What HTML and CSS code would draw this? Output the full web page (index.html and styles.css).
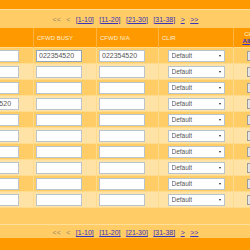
FILE: index.html
```html
<!DOCTYPE html>
<html lang="en">
<head>
  <meta charset="UTF-8">
  <title>Call Forwarding</title>
  <link rel="stylesheet" href="styles.css">
</head>
<body>
  <div class="page">
    <div class="topbar"></div>

    <!-- Pager (top) -->
    <div class="pager">
      <span>&lt;&lt;</span>
      <span>&lt;</span>
      <a href="#">[1-10]</a>
      <a href="#">[11-20]</a>
      <a href="#">[21-30]</a>
      <a href="#">[31-38]</a>
      <a href="#">&gt;</a>
      <a href="#">&gt;&gt;</a>
    </div>

    <table class="grid">
      <colgroup>
        <col class="c-num"><col class="c-num"><col class="c-num"><col class="c-clir"><col class="c-chk">
      </colgroup>
      <thead>
        <tr>
          <th></th>
          <th>CFWD BUSY</th>
          <th>CFWD N/A</th>
          <th>CLIR</th>
          <th class="chk">CHECK<br><a href="#">All</a> <a href="#">None</a></th>
        </tr>
      </thead>
      <tbody id="rows"></tbody>
    </table>

    <div class="footer-row"></div>

    <!-- Pager (bottom) -->
    <div class="pager bottom">
      <span>&lt;&lt;</span>
      <span>&lt;</span>
      <a href="#">[1-10]</a>
      <a href="#">[11-20]</a>
      <a href="#">[21-30]</a>
      <a href="#">[31-38]</a>
      <a href="#">&gt;</a>
      <a href="#">&gt;&gt;</a>
    </div>
    <div class="bottombar"></div>
  </div>

  <script>
    // values per row: [cfwd, busy, n/a]
    const data = [
      ['', '022354520', '022354520'],
      ['', '', ''],
      ['', '', ''],
      ['022354520', '', ''],
      ['', '', ''],
      ['', '', ''],
      ['', '', ''],
      ['', '', ''],
      ['', '', ''],
      ['', '', '']
    ];

    const tbody = document.getElementById('rows');
    data.forEach((row, i) => {
      const tr = document.createElement('tr');
      tr.className = i % 2 ? 'light' : 'dark';
      row.forEach((val, j) => {
        const td = document.createElement('td');
        const input = document.createElement('input');
        input.type = 'text';
        input.value = val;
        if (i === 0 && j === 1) input.className = 'active';
        td.appendChild(input);
        tr.appendChild(td);
      });

      const clir = document.createElement('td');
      clir.innerHTML = '<span class="select"><select><option>Default</option></select></span>';
      tr.appendChild(clir);

      const chk = document.createElement('td');
      chk.className = 'chk';
      chk.innerHTML = '<input type="checkbox">';
      tr.appendChild(chk);

      tbody.appendChild(tr);
    });
  </script>
</body>
</html>
```

FILE: styles.css
```css
body {
  margin: 0;
  overflow: hidden;
  background-color: #ffcc66;
  font-family: "Liberation Sans", Arial, sans-serif;
}
.page {
  width: 311px;
  margin-left: -30px;
}
.topbar {
  height: 9px;
  background-color: #ff9900;
}
.bottombar {
  height: 14px;
  background-color: #ff9900;
}
.pager {
  height: 18px;
  border-top: 1px solid #ffdf9c;
  background-color: #ffcc66;
  display: flex;
  justify-content: center;
  align-items: center;
  gap: 5.5px;
  font-size: 7px;
  color: #9a8868;
}
.pager.bottom {
  height: 14px;
  box-sizing: border-box;
  align-items: flex-end;
  padding-bottom: 2px;
}
.pager a {
  color: #3b33b8;
  text-decoration: underline;
}
.footer-row {
  height: 16px;
  background-color: #ffcc66;
}

/* Grid */
.grid {
  width: 311px;
  table-layout: fixed;
  border-collapse: collapse;
}
.c-num { width: 63px; }
.c-num:nth-child(3) { width: 62px; }
.c-clir { width: 75px; }
.c-chk { width: 48px; }

.grid th {
  height: 19px;
  padding: 0 3px;
  background-color: #ff9900;
  border-left: 1px solid #ffb443;
  color: #ffeed2;
  font-size: 6px;
  font-weight: normal;
  text-align: left;
  vertical-align: middle;
  white-space: nowrap;
}
.grid th.chk {
  text-align: center;
  line-height: 7px;
  padding: 0 6px 0 0;
}
.grid th.chk a {
  color: #3030c8;
  font-weight: bold;
}
.grid td {
  height: 15px;
  padding: 0 2px;
  border: 1px solid #ffdb8e;
  vertical-align: middle;
  font-size: 7px;
  line-height: 7px;
}
.grid tr.dark td { background-color: #ffcc66; }
.grid tr.light td { background-color: #ffe2a6; }
.grid td.chk { padding-left: 13px; }

input[type="text"] {
  display: block;
  width: 46px;
  height: 12px;
  box-sizing: border-box;
  margin: 0;
  padding: 0 2px;
  border: 1px solid #b9c4cd;
  background-color: #fff;
  font-family: "Liberation Sans", Arial, sans-serif;
  font-size: 7px;
  color: #555;
}
input.active {
  border-color: #8fa6bb;
}
.select {
  position: relative;
  display: block;
  width: 57px;
  height: 12px;
  margin: 0 auto;
}
.select select {
  -webkit-appearance: none;
  appearance: none;
  display: block;
  width: 57px;
  height: 12px;
  margin: 0;
  padding: 0 3px;
  border: 1px solid #b9c4cd;
  border-radius: 0;
  background-color: #fff;
  font-family: "Liberation Sans", Arial, sans-serif;
  font-size: 6.5px;
  color: #555;
}
.select::after {
  content: "";
  position: absolute;
  right: 4px;
  top: 5px;
  border-left: 1.5px solid transparent;
  border-right: 1.5px solid transparent;
  border-top: 2px solid #222;
}
input[type="checkbox"] {
  -webkit-appearance: none;
  appearance: none;
  display: block;
  width: 10px;
  height: 10px;
  margin: 0;
  border: 1px solid #9c9c9c;
  background-color: #e4e4e4;
}
```
